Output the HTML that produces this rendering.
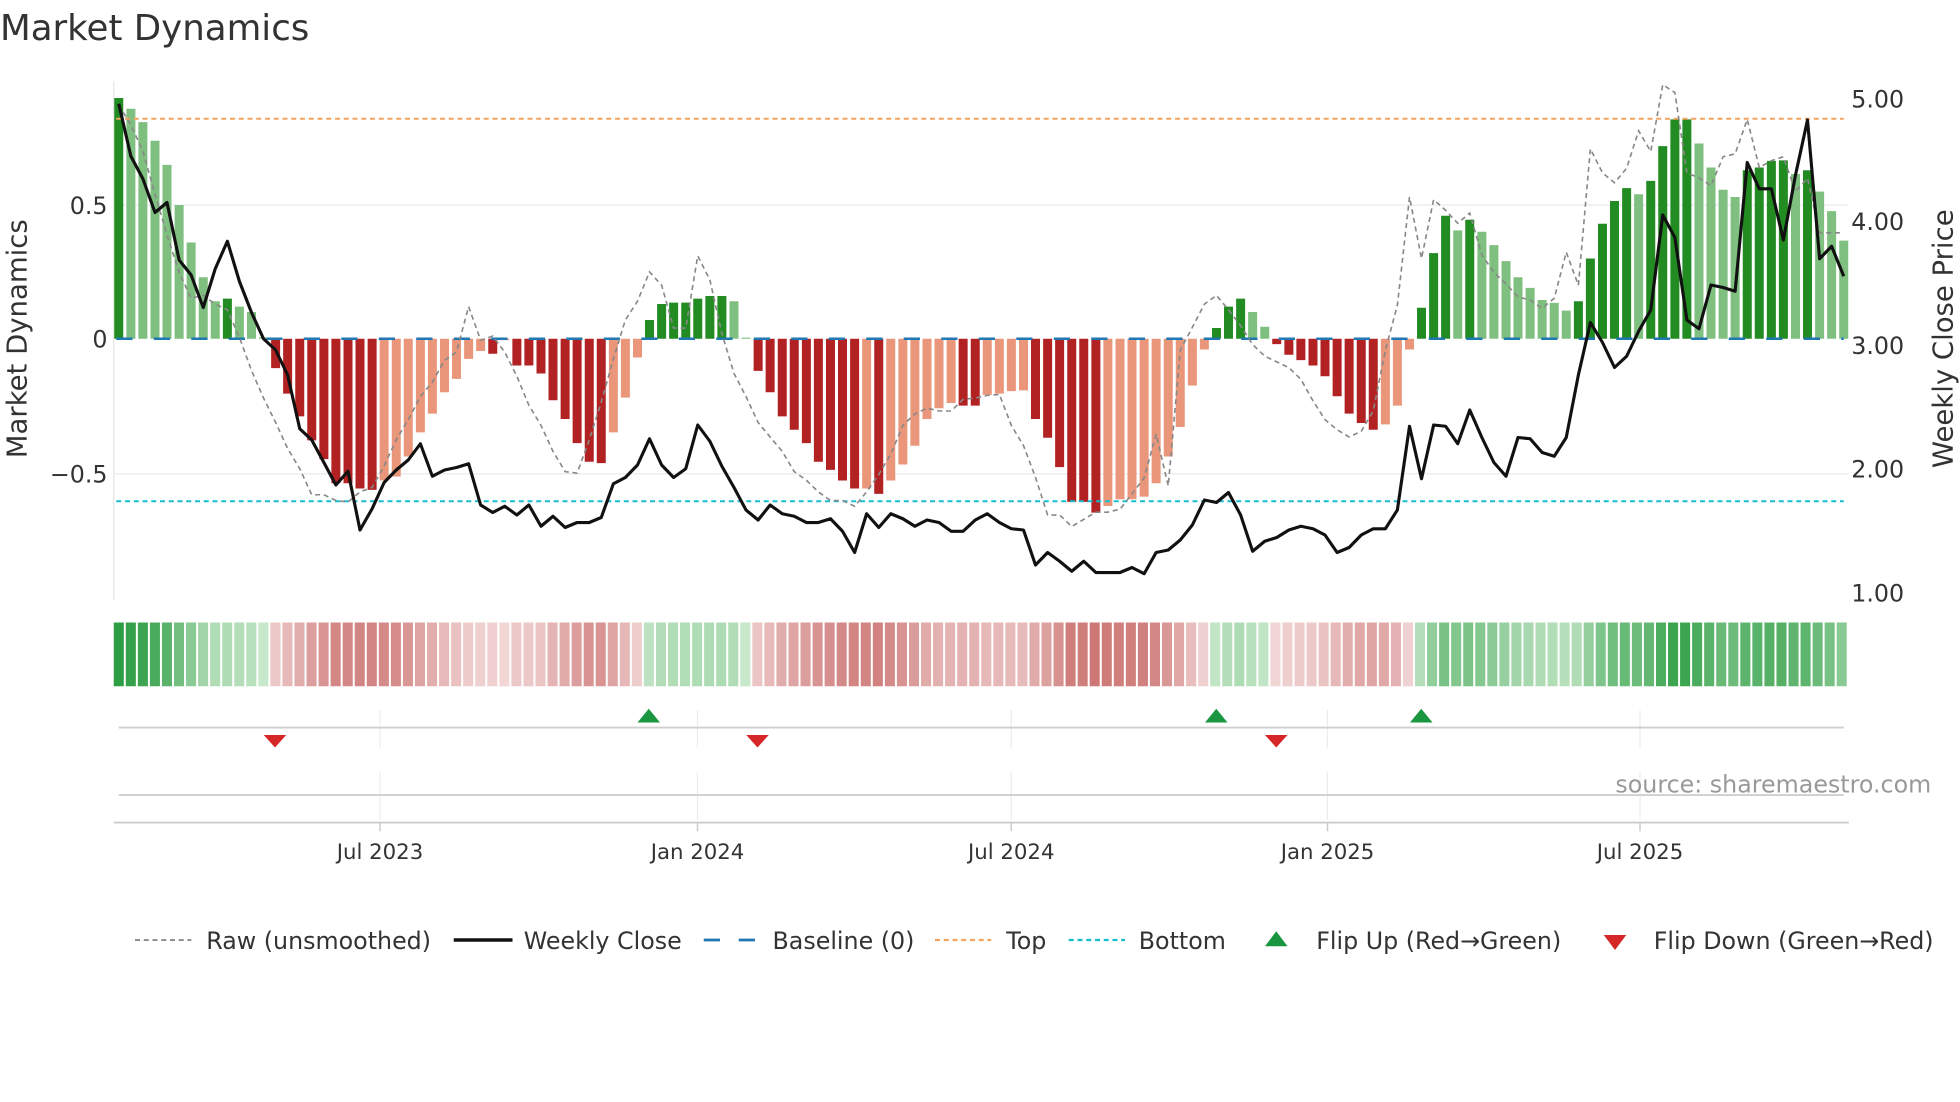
<!DOCTYPE html>
<html><head><meta charset="utf-8"><style>
html,body{margin:0;padding:0;background:#fff;overflow:hidden}
svg{display:block;font-family:"DejaVu Sans","Liberation Sans",sans-serif}
</style></head><body>
<svg id="s" xmlns="http://www.w3.org/2000/svg" width="1960" height="1102" viewBox="0 0 1568 881.6">
<rect width="1568" height="882" fill="#fff"/>
<text x="0" y="32" font-size="28.5" fill="#333">Market Dynamics</text>
<line x1="91" y1="164" x2="1479" y2="164" stroke="#eceef2" stroke-width="1.2"/>
<line x1="91" y1="379" x2="1479" y2="379" stroke="#eceef2" stroke-width="1.2"/>
<line x1="91" y1="65" x2="91" y2="480" stroke="#e6e6e6" stroke-width="1"/>
<g id="bars"></g>
<g id="heat"></g>
<line x1="93" y1="95" x2="1475" y2="95" stroke="#f4a460" stroke-width="1.6" stroke-dasharray="4,3"/>
<line x1="93" y1="401" x2="1475" y2="401" stroke="#17becf" stroke-width="1.6" stroke-dasharray="4,3"/>
<line x1="93" y1="271" x2="1475" y2="271" stroke="#1f77b4" stroke-width="2" stroke-dasharray="13,17"/>
<polyline id="raw" fill="none" stroke="#888" stroke-width="1.3" stroke-dasharray="4,3"/>
<polyline id="close" fill="none" stroke="#111" stroke-width="2.5" stroke-linejoin="round"/>
<g font-size="19" fill="#333" text-anchor="end">
<text x="86" y="171">0.5</text><text x="86" y="278">0</text><text x="86" y="386">−0.5</text>
</g>
<g font-size="19" fill="#333">
<text x="1481" y="86">5.00</text><text x="1481" y="184">4.00</text><text x="1481" y="283">3.00</text><text x="1481" y="382">2.00</text><text x="1481" y="481">1.00</text>
</g>
<text transform="translate(21,271) rotate(-90)" font-size="22" fill="#333" text-anchor="middle">Market Dynamics</text>
<text transform="translate(1562,271) rotate(-90)" font-size="22" fill="#333" text-anchor="middle">Weekly Close Price</text>
<g stroke="#ececec" stroke-width="1">
<line x1="304" y1="568" x2="304" y2="598"/><line x1="558" y1="568" x2="558" y2="598"/><line x1="809" y1="568" x2="809" y2="598"/><line x1="1062" y1="568" x2="1062" y2="598"/><line x1="1312" y1="568" x2="1312" y2="598"/>
<line x1="304" y1="618" x2="304" y2="656"/><line x1="558" y1="618" x2="558" y2="656"/><line x1="809" y1="618" x2="809" y2="656"/><line x1="1062" y1="618" x2="1062" y2="656"/><line x1="1312" y1="618" x2="1312" y2="656"/>
</g>
<line x1="95" y1="582" x2="1475" y2="582" stroke="#cfcfcf" stroke-width="1.5"/>
<line x1="95" y1="636" x2="1475" y2="636" stroke="#cfcfcf" stroke-width="1.5"/>
<g fill="#1a9641">
<path d="M510,578 L519,567 L528,578 Z"/><path d="M964,578 L973,567 L982,578 Z"/><path d="M1128,578 L1137,567 L1146,578 Z"/>
</g>
<g fill="#d62728">
<path d="M211,588 L229,588 L220,598 Z"/><path d="M597,588 L615,588 L606,598 Z"/><path d="M1012,588 L1030,588 L1021,598 Z"/>
</g>
<text x="1545" y="634" font-size="19" fill="#999" text-anchor="end">source: sharemaestro.com</text>
<line x1="91" y1="658" x2="1479" y2="658" stroke="#ccc" stroke-width="1.5"/>
<g stroke="#ccc" stroke-width="1.2">
<line x1="304" y1="658" x2="304" y2="665"/><line x1="558" y1="658" x2="558" y2="665"/><line x1="809" y1="658" x2="809" y2="665"/><line x1="1062" y1="658" x2="1062" y2="665"/><line x1="1312" y1="658" x2="1312" y2="665"/>
</g>
<g font-size="17" fill="#333" text-anchor="middle">
<text x="304" y="687">Jul 2023</text><text x="558" y="687">Jan 2024</text><text x="809" y="687">Jul 2024</text><text x="1062" y="687">Jan 2025</text><text x="1312" y="687">Jul 2025</text>
</g>
<g font-size="19" fill="#333">
<line x1="108" y1="752" x2="153" y2="752" stroke="#888" stroke-width="1.5" stroke-dasharray="4,3"/>
<text x="165" y="759">Raw (unsmoothed)</text>
<line x1="363" y1="752" x2="410" y2="752" stroke="#111" stroke-width="2.8"/>
<text x="419" y="759">Weekly Close</text>
<line x1="563" y1="752" x2="606" y2="752" stroke="#1f77b4" stroke-width="2.2" stroke-dasharray="13,15"/>
<text x="618" y="759">Baseline (0)</text>
<line x1="748" y1="752" x2="793" y2="752" stroke="#f4a460" stroke-width="1.8" stroke-dasharray="4,3"/>
<text x="805" y="759">Top</text>
<line x1="855" y1="752" x2="900" y2="752" stroke="#17becf" stroke-width="1.8" stroke-dasharray="4,3"/>
<text x="911" y="759">Bottom</text>
<path d="M1012,757 L1021,745 L1030,757 Z" fill="#1a9641"/>
<text x="1053" y="759">Flip Up (Red→Green)</text>
<path d="M1283,748 L1301,748 L1292,760 Z" fill="#d62728"/>
<text x="1323" y="759">Flip Down (Green→Red)</text>
</g>
</svg>
<script>
var D=[[.90,'DG'],[.86,'LG'],[.81,'LG'],[.74,'LG'],[.65,'LG'],[.50,'LG'],[.36,'LG'],[.23,'LG'],[.14,'LG'],[.15,'DG'],[.12,'LG'],[.10,'LG'],[0.005,'LG'],
[-.11,'DR'],[-.205,'DR'],[-.29,'DR'],[-.38,'DR'],[-.45,'DR'],[-.54,'DR'],[-.54,'DR'],[-.56,'DR'],[-.565,'DR'],[-.53,'LR'],[-.515,'LR'],[-.44,'LR'],[-.35,'LR'],[-.28,'LR'],[-.20,'LR'],[-.15,'LR'],[-.075,'LR'],[-.046,'LR'],[-.056,'DR'],[-.005,'LR'],
[-.10,'DR'],[-.10,'DR'],[-.13,'DR'],[-.23,'DR'],[-.30,'DR'],[-.39,'DR'],[-.46,'DR'],[-.465,'DR'],[-.35,'LR'],[-.22,'LR'],[-.07,'LR'],
[.07,'DG'],[.13,'DG'],[.135,'DG'],[.135,'DG'],[.15,'DG'],[.16,'DG'],[.16,'DG'],[.14,'LG'],[.004,'LG'],
[-.12,'DR'],[-.20,'DR'],[-.29,'DR'],[-.34,'DR'],[-.39,'DR'],[-.46,'DR'],[-.49,'DR'],[-.53,'DR'],[-.56,'DR'],[-.56,'LR'],[-.58,'DR'],[-.53,'LR'],[-.47,'LR'],[-.40,'LR'],[-.30,'LR'],[-.26,'LR'],[-.24,'LR'],[-.25,'DR'],[-.25,'DR'],[-.21,'LR'],[-.205,'LR'],[-.196,'LR'],[-.193,'LR'],
[-.30,'DR'],[-.37,'DR'],[-.48,'DR'],[-.61,'DR'],[-.61,'DR'],[-.65,'DR'],[-.625,'LR'],[-.60,'LR'],[-.60,'LR'],[-.59,'LR'],[-.54,'LR'],[-.44,'LR'],[-.33,'LR'],[-.175,'LR'],[-.04,'LR'],
[.04,'DG'],[.12,'DG'],[.15,'DG'],[.10,'LG'],[.045,'LG'],
[-.02,'DR'],[-.06,'DR'],[-.08,'DR'],[-.10,'DR'],[-.14,'DR'],[-.215,'DR'],[-.28,'DR'],[-.315,'DR'],[-.34,'DR'],[-.32,'LR'],[-.25,'LR'],[-.04,'LR'],
[.116,'DG'],[.32,'DG'],[.46,'DG'],[.405,'LG'],[.445,'DG'],[.40,'LG'],[.35,'LG'],[.29,'LG'],[.23,'LG'],[.19,'LG'],[.145,'LG'],[.134,'LG'],[.105,'LG'],[.14,'DG'],[.30,'DG'],[.43,'DG'],[.515,'DG'],[.563,'DG'],[.54,'LG'],[.59,'DG'],[.72,'DG'],[.82,'DG'],[.82,'DG'],[.73,'LG'],[.64,'LG'],[.557,'LG'],[.53,'LG'],[.63,'DG'],[.64,'DG'],[.665,'DG'],[.667,'DG'],[.616,'LG'],[.63,'DG'],[.55,'LG'],[.477,'LG'],[.367,'LG']];
var C=[83,125,143,170,162,208,220,246,215,193,225,250,271,280,300,343,352,370,388,377,424,407,386,376,368,355,381,376,374,371,404,410,405,412,404,421,413,422,418,418,414,387,382,372,351,372,382,375,340,353,373,390,408,416,404,411,413,418,418,415,425,442,411,422,411,415,421,416,418,425,425,416,411,418,423,424,452,442,449,457,449,458,458,458,454,459,442,440,432,420,400,402,394,412,441,433,430,424,421,423,428,442,438,428,423,423,408,341,383,340,341,355,328,350,370,381,350,351,362,365,350,300,258,274,294,285,265,248,172,190,256,263,228,230,233,130,151,151,192,140,96,207,197,221];
var N=D.length,x0=95,dx=(1475-95)/(N-1),Y0=271,K=214;
var col={DG:'#228b22',LG:'#7fbf7f',DR:'#b22222',LR:'#e9967a'};
var ns='http://www.w3.org/2000/svg',bars=document.getElementById('bars'),heat=document.getElementById('heat');
function el(t,a,p){var e=document.createElementNS(ns,t);for(var k in a)e.setAttribute(k,a[k]);p.appendChild(e);return e;}
var cw=(1479-91)/N;
for(var i=0;i<N;i++){var v=D[i][0],x=x0+i*dx,h=Math.abs(v)*K,y=v>0?Y0-h:Y0;
el('rect',{x:(x-3.6).toFixed(1),y:y.toFixed(1),width:7.2,height:h.toFixed(1),fill:col[D[i][1]]},bars);
var a=Math.min(1,Math.abs(v)/0.9),r,g,b;
if(v>=0){r=Math.round(200-(200-46)*a);g=Math.round(232-(232-158)*a);b=Math.round(203-(203-68)*a);}
else{a=Math.min(1,Math.abs(v)/0.65);r=Math.round(242-(242-205)*a);g=Math.round(215-(215-120)*a);b=Math.round(215-(215-118)*a);}
el('rect',{x:(91+i*cw).toFixed(2),y:498,width:(cw-1.6).toFixed(2),height:51,fill:'rgb('+r+','+g+','+b+')'},heat);}
var sp={29:.12,31:.01,32:-.05,42:.07,44:.25,45:.2,46:.04,47:.04,48:.31,49:.22,50:.02,84:-.58,85:-.52,87:-.55,107:.53,108:.3,109:.52,110:.48,112:.47,121:.2,122:.71,123:.62,127:.7,128:.95,129:.92,130:.62,135:.82,136:.64,139:.55,140:.6};
var pr=[],pc=[];
for(var i=0;i<N;i++){var v=D[Math.min(i+2,N-1)][0]*1.08;if(sp[i]!==undefined)v=sp[i];var x=x0+i*dx;
pr.push(x.toFixed(1)+','+(Y0-v*K).toFixed(1));pc.push(x.toFixed(1)+','+C[i]);}
document.getElementById('raw').setAttribute('points',pr.join(' '));
document.getElementById('close').setAttribute('points',pc.join(' '));
</script>
</body></html>
